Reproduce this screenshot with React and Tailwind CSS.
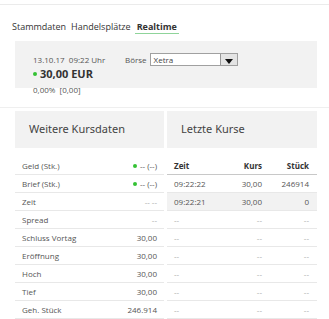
import React from "react";

const kursdaten = [
  { label: "Geld (Stk.)", value: "-- (--)", dot: true },
  { label: "Brief (Stk.)", value: "-- (--)", dot: true },
  { label: "Zeit", value: "-- --", muted: true },
  { label: "Spread", value: "--", muted: true },
  { label: "Schluss Vortag", value: "30,00" },
  { label: "Eröffnung", value: "30,00" },
  { label: "Hoch", value: "30,00" },
  { label: "Tief", value: "30,00" },
  { label: "Geh. Stück", value: "246.914" },
];

const kurse = [
  { zeit: "09:22:22", kurs: "30,00", stueck: "246914" },
  { zeit: "09:22:21", kurs: "30,00", stueck: "0", shaded: true },
  { zeit: "--", kurs: "--", stueck: "--", muted: true },
  { zeit: "--", kurs: "--", stueck: "--", muted: true },
  { zeit: "--", kurs: "--", stueck: "--", muted: true },
  { zeit: "--", kurs: "--", stueck: "--", muted: true },
  { zeit: "--", kurs: "--", stueck: "--", muted: true },
  { zeit: "--", kurs: "--", stueck: "--", muted: true },
];

const Dot = () => (
  <span className="inline-block w-[4px] h-[4px] rounded-full bg-[#34c234] mr-[3px]" />
);

const App = () => {
  return (
    <div
      className="w-[329px] h-[319px] bg-white overflow-hidden text-[#555]"
      style={{ fontFamily: '"Open Sans", "Liberation Sans", sans-serif' }}
    >
      <div className="h-[4px]" />
      <div className="h-px bg-[#ebebeb]" />

      {/* tabs */}
      <div className="flex pl-[12px] pt-[16px] text-[9px] leading-[11px] text-[#333]">
        <span className="pb-[1px] mr-[5px]">Stammdaten</span>
        <span className="pb-[1px] mr-[4px]">Handelsplätze</span>
        <span className="pb-[1px] px-[2px] font-bold border-b border-[#8fd49a]">Realtime</span>
      </div>

      {/* quote box */}
      <div className="mx-[15px] mt-[7px] h-[47px] w-[302px] bg-[#f2f2f2] pl-[18px] pt-[12px]">
        <div className="flex items-center h-[13px] text-[8px]">
          <span className="w-[92px]">13.10.17&nbsp; 09:22 Uhr</span>
          <span className="mr-[3px]">Börse</span>
          <div className="flex items-stretch w-[88px] h-[13px] border border-[#a0a0a0] bg-white">
            <span className="flex-1 pl-[3px] leading-[11px] text-[#444]">Xetra</span>
            <span className="w-[17px] flex items-end justify-center pb-[1px] bg-[#e4e4e4] border-l border-[#999]">
              <svg width="8" height="5" viewBox="0 0 8 5">
                <path d="M0 0h8L4 5z" fill="#111" />
              </svg>
            </span>
          </div>
        </div>
        <div className="flex items-center mt-[1px] h-[14px]">
          <Dot />
          <span className="text-[11px] font-bold text-[#333] leading-[14px]">30,00 EUR</span>
        </div>
        <div className="mt-[3px] text-[8px] leading-[12px]">0,00%&nbsp; [0,00]</div>
      </div>

      <div className="mt-[19px] h-px bg-[#efefef]" />

      {/* panels */}
      <div className="grid grid-cols-[149px_150px] gap-[3px] px-[15px] mt-[3px]">
        <div>
          <div
            className="h-[37px] bg-[#f2f2f2] flex items-center pl-[14px] text-[11px] text-[#444]"
            style={{ fontFamily: '"Noto Sans", "Open Sans", sans-serif' }}
          >
            Weitere Kursdaten
          </div>
          <div className="mt-[9px] text-[8px]">
            {kursdaten.map((r) => (
              <div
                key={r.label}
                className="h-[18px] flex items-center justify-between px-[7px] border-b border-[#e8e8e8]"
              >
                <span>{r.label}</span>
                <span className={`flex items-center ${r.muted ? "text-[#aaa]" : ""}`}>
                  {r.dot && <Dot />}
                  {r.value}
                </span>
              </div>
            ))}
          </div>
        </div>

        <div>
          <div
            className="h-[37px] bg-[#f2f2f2] flex items-center pl-[14px] text-[11px] text-[#444]"
            style={{ fontFamily: '"Noto Sans", "Open Sans", sans-serif' }}
          >
            Letzte Kurse
          </div>
          <div className="mt-[9px] text-[8px]">
            <div className="h-[18px] flex items-center pl-[7px] pr-[8px] border-b border-[#c8c8c8] font-bold text-[#333]">
              <span className="w-[60px]">Zeit</span>
              <span className="flex-1 text-right">Kurs</span>
              <span className="w-[47px] text-right">Stück</span>
            </div>
            {kurse.map((r, i) => (
              <div
                key={i}
                className={`h-[18px] flex items-center pl-[7px] pr-[8px] border-b border-[#e8e8e8] ${
                  r.shaded ? "bg-[#f2f2f2]" : ""
                } ${r.muted ? "text-[#aaa]" : ""}`}
              >
                <span className="w-[60px]">{r.zeit}</span>
                <span className="flex-1 text-right">{r.kurs}</span>
                <span className="w-[47px] text-right">{r.stueck}</span>
              </div>
            ))}
          </div>
        </div>
      </div>
    </div>
  );
};

export default App;
